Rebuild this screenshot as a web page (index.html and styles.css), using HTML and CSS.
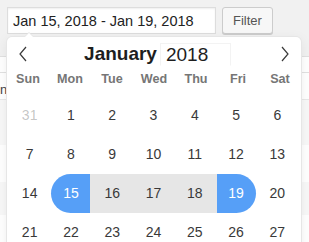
FILE: index.html
```html
<!DOCTYPE html>
<html>
<head>
<meta charset="utf-8">
<link rel="stylesheet" href="styles.css">
</head>
<body>
<div class="toolbar">
  <input class="date-input" type="text" value="Jan 15, 2018 - Jan 19, 2018" readonly>
  <button class="button" type="button">Filter</button>
</div>
<div class="list">
  <div class="row row-head"></div>
  <div class="row row-first"><span class="cell">ns</span></div>
  <div class="row row-tall alt"></div>
  <div class="row row-mid"></div>
  <div class="row row-short alt"></div>
  <div class="row row-last"></div>
</div>
<div class="calendar">
  <div class="cal-head">
    <span class="nav"><svg width="8" height="16" viewBox="0 0 8 16"><polyline points="7,1 1,8 7,15" fill="none" stroke="#3a3a3a" stroke-width="1.2"/></svg></span>
    <div class="title"><span class="month">January</span><span class="year">2018</span></div>
    <span class="nav"><svg width="8" height="16" viewBox="0 0 8 16"><polyline points="1,1 7,8 1,15" fill="none" stroke="#3a3a3a" stroke-width="1.2"/></svg></span>
  </div>
  <div class="weekdays">
    <span>Sun</span><span>Mon</span><span>Tue</span><span>Wed</span><span>Thu</span><span>Fri</span><span>Sat</span>
  </div>
  <div class="days">
    <div class="day other"><span>31</span></div>
    <div class="day"><span>1</span></div>
    <div class="day"><span>2</span></div>
    <div class="day"><span>3</span></div>
    <div class="day"><span>4</span></div>
    <div class="day"><span>5</span></div>
    <div class="day"><span>6</span></div>
    <div class="day"><span>7</span></div>
    <div class="day"><span>8</span></div>
    <div class="day"><span>9</span></div>
    <div class="day"><span>10</span></div>
    <div class="day"><span>11</span></div>
    <div class="day"><span>12</span></div>
    <div class="day"><span>13</span></div>
    <div class="day"><span>14</span></div>
    <div class="day start"><span>15</span></div>
    <div class="day in-range"><span>16</span></div>
    <div class="day in-range"><span>17</span></div>
    <div class="day in-range"><span>18</span></div>
    <div class="day end"><span>19</span></div>
    <div class="day"><span>20</span></div>
    <div class="day"><span>21</span></div>
    <div class="day"><span>22</span></div>
    <div class="day"><span>23</span></div>
    <div class="day"><span>24</span></div>
    <div class="day"><span>25</span></div>
    <div class="day"><span>26</span></div>
    <div class="day"><span>27</span></div>
    <div class="day"><span>28</span></div>
    <div class="day"><span>29</span></div>
    <div class="day"><span>30</span></div>
    <div class="day"><span>31</span></div>
    <div class="day other"><span>1</span></div>
    <div class="day other"><span>2</span></div>
    <div class="day other"><span>3</span></div>
  </div>
</div>
</body>
</html>
```
FILE: styles.css
```css
* { box-sizing: border-box; }
html, body {
  margin: 0;
  padding: 0;
  background: #f1f1f1;
  font-family: "Liberation Sans", Arial, sans-serif;
  overflow: hidden;
}
.toolbar {
  display: flex;
  align-items: flex-start;
  gap: 6px;
  padding: 7px 0 0 7px;
  height: 35px;
}
.date-input {
  width: 209px;
  height: 27px;
  margin: 0;
  padding: 0 0 0 5px;
  border: 1px solid #dddddd;
  background: #ffffff;
  box-shadow: inset 0 1px 2px rgba(0,0,0,0.07);
  font-family: "Liberation Sans", Arial, sans-serif;
  font-size: 14.5px;
  color: #222222;
  outline: none;
}
.button {
  height: 27px;
  margin: 0;
  padding: 0 10px;
  border: 1px solid #cccccc;
  border-radius: 3px;
  background: #f7f7f7;
  box-shadow: 0 1px 0 #cccccc;
  font-family: "Liberation Sans", Arial, sans-serif;
  font-size: 13px;
  color: #555555;
  line-height: 25px;
}
.list {
  margin-top: 21px;
  border-top: 1px solid #e1e1e1;
}
.row { background: #ffffff; }
.row.alt { background: #f8f8f8; }
.row-head { height: 16px; border-bottom: 1px solid #e1e1e1; }
.row-first {
  height: 27px;
  border-bottom: 1px solid #e8e8e8;
  display: flex;
  align-items: flex-end;
  padding-bottom: 3px;
}
.row-tall { height: 45px; }
.row-mid { height: 37px; }
.row-short { height: 33px; }
.row-last { height: 40px; }
.cell { font-size: 13px; color: #444; line-height: 13px; }

.calendar {
  position: absolute;
  left: 7px;
  top: 37px;
  width: 294px;
  height: 240px;
  background: #ffffff;
  border-radius: 5px;
  box-shadow: 1px 0 0 #e6e6e6, -1px 0 0 #e6e6e6, 0 1px 0 #e6e6e6, 0 -1px 0 #e6e6e6, 0 3px 13px rgba(0,0,0,0.08);
}
.calendar::before,
.calendar::after {
  content: "";
  position: absolute;
  border: solid transparent;
  height: 0;
  width: 0;
}
.calendar::before {
  left: 17px;
  top: -10px;
  border-width: 5px;
  border-bottom-color: #e6e6e6;
}
.calendar::after {
  left: 18px;
  top: -8px;
  border-width: 4px;
  border-bottom-color: #ffffff;
}
.cal-head {
  display: flex;
  align-items: center;
  height: 34px;
  padding: 0 12px;
}
.nav { display: flex; width: 8px; height: 16px; }
.title {
  flex: 1;
  display: flex;
  align-items: center;
  justify-content: center;
  padding-left: 7px;
  color: #1e1e1e;
  font-size: 19px;
}
.month { font-weight: bold; }
.year {
  margin-left: 3px;
  width: 71px;
  height: 23px;
  line-height: 21px;
  padding-left: 5px;
  border: 1px solid #f3f3f3;
  border-bottom-color: transparent;
}
.weekdays {
  display: grid;
  grid-template-columns: repeat(7, 42px);
  height: 17px;
  line-height: 17px;
  font-size: 12.6px;
  font-weight: bold;
  color: #767676;
  text-align: center;
}
.days {
  display: grid;
  grid-template-columns: repeat(7, 1fr);
  width: 289px;
  margin: 8px 0 0 2px;
}
.day { display: flex; justify-content: center; }
.day span {
  width: 39px;
  height: 39px;
  line-height: 39px;
  text-align: center;
  border-radius: 150px;
  font-size: 14px;
  color: #393939;
}
.day.other span { color: rgba(57,57,57,0.3); }
.day.in-range span {
  background: #e6e6e6;
  border-radius: 0;
  box-shadow: -3px 0 0 #e6e6e6, 3px 0 0 #e6e6e6;
}
.day.start span,
.day.end span {
  position: relative;
  z-index: 1;
  background: #569ff7;
  color: #ffffff;
}
.day.start span { border-radius: 50px 0 0 50px; }
.day.end span { border-radius: 0 50px 50px 0; }
```
